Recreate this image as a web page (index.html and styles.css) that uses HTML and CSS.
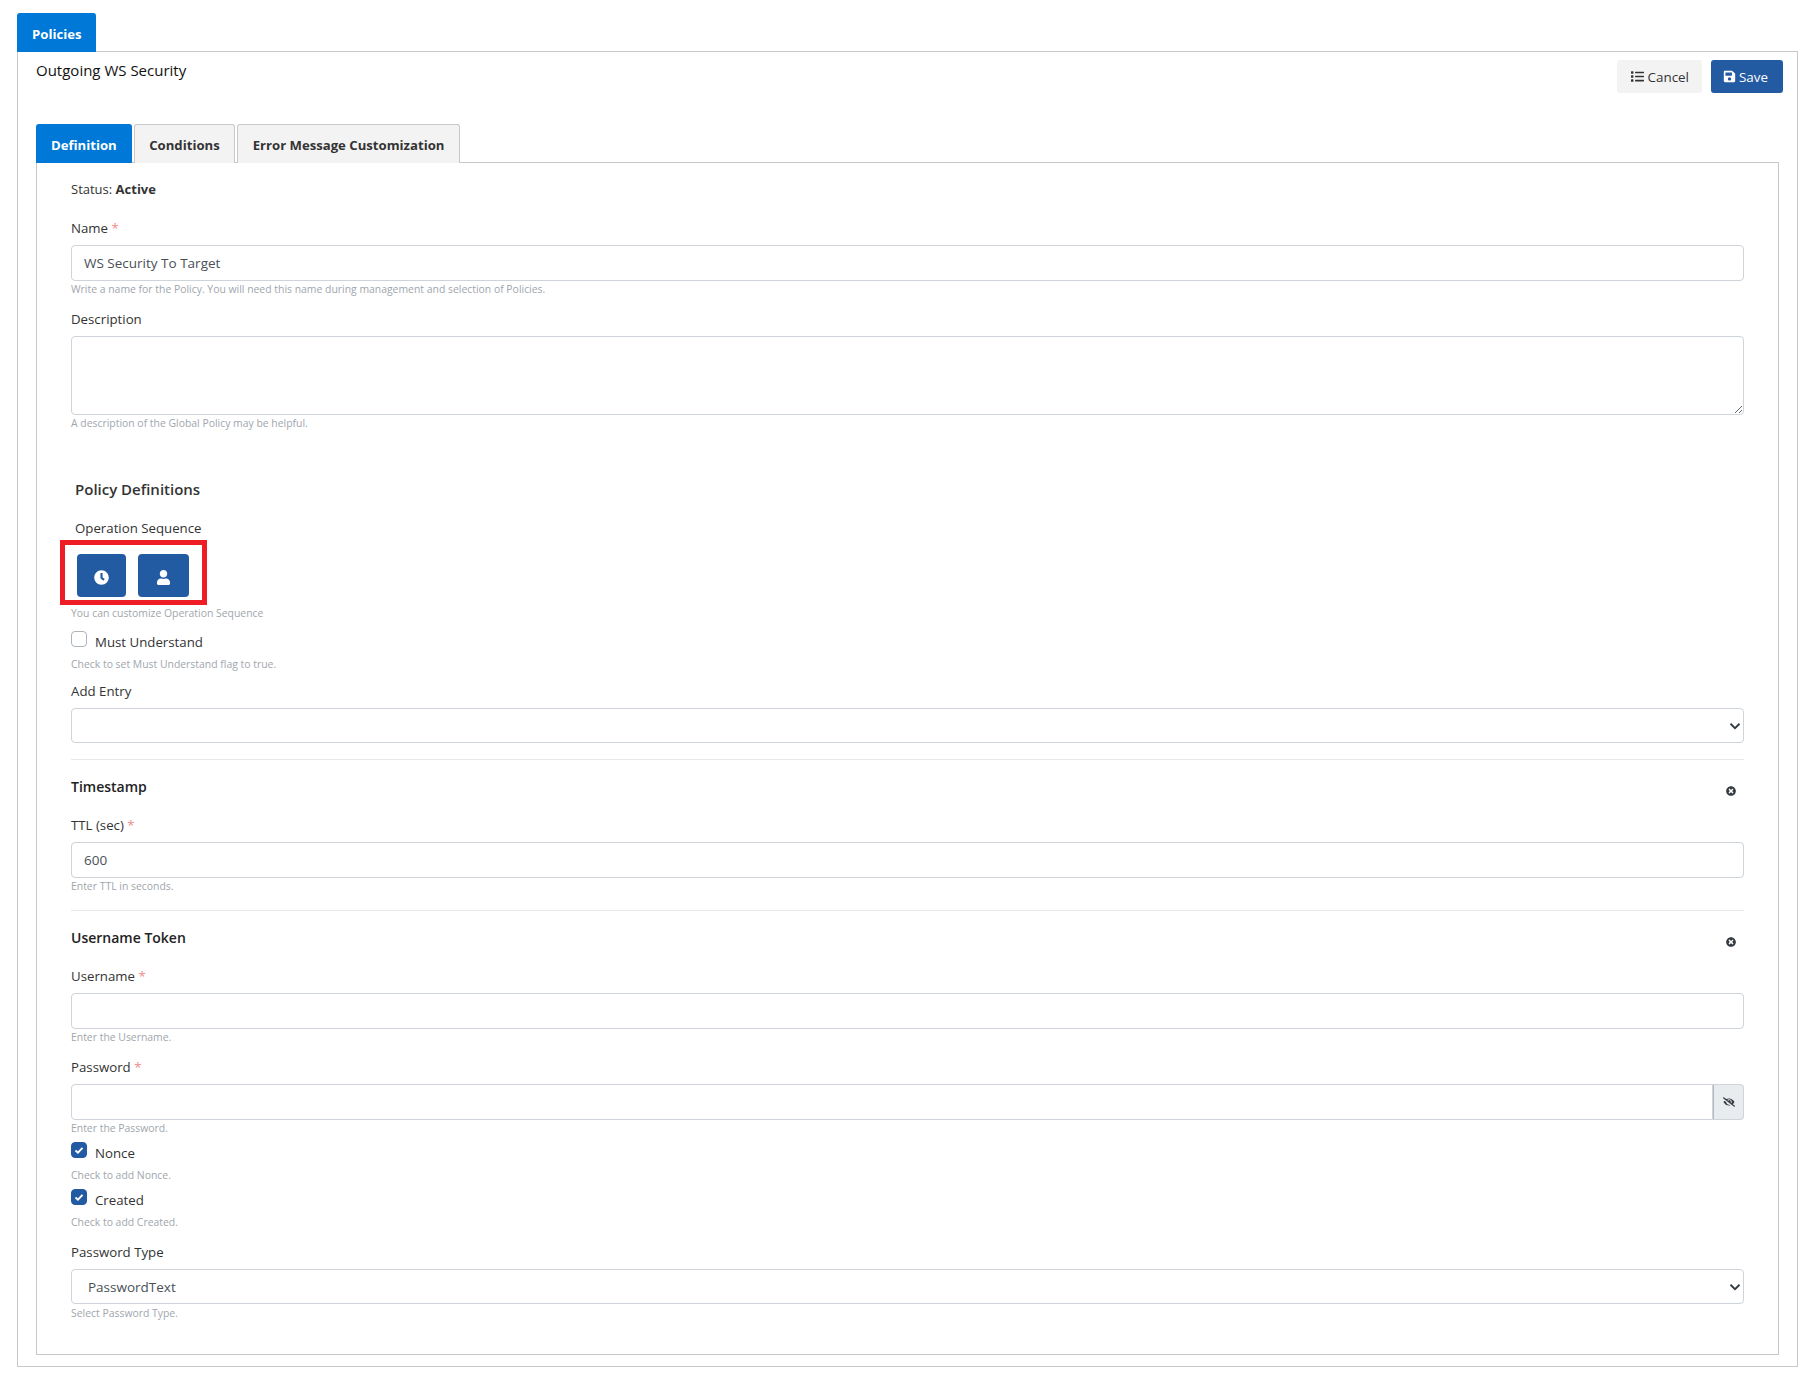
FILE: index.html
```html
<!DOCTYPE html>
<html>
<head>
    <meta charset="utf-8">
    <title>Outgoing WS Security</title>
    <link rel="stylesheet" href="styles.css">
</head>
<body>

<div class="top-tabs">
    <a class="tab tab-active">Policies</a>
</div>

<div class="panel">
    <div class="panel-head">
        <h1 class="page-title">Outgoing WS Security</h1>
        <div class="head-buttons">
            <button class="btn btn-light">
                <svg class="btn-icon" viewBox="0 0 512 512"><path d="M80 368H16a16 16 0 0 0-16 16v64a16 16 0 0 0 16 16h64a16 16 0 0 0 16-16v-64a16 16 0 0 0-16-16zm0-320H16A16 16 0 0 0 0 64v64a16 16 0 0 0 16 16h64a16 16 0 0 0 16-16V64a16 16 0 0 0-16-16zm0 160H16a16 16 0 0 0-16 16v64a16 16 0 0 0 16 16h64a16 16 0 0 0 16-16v-64a16 16 0 0 0-16-16zm416 176H176a16 16 0 0 0-16 16v32a16 16 0 0 0 16 16h320a16 16 0 0 0 16-16v-32a16 16 0 0 0-16-16zm0-320H176a16 16 0 0 0-16 16v32a16 16 0 0 0 16 16h320a16 16 0 0 0 16-16V80a16 16 0 0 0-16-16zm0 160H176a16 16 0 0 0-16 16v32a16 16 0 0 0 16 16h320a16 16 0 0 0 16-16v-32a16 16 0 0 0-16-16z"/></svg>
                Cancel
            </button>
            <button class="btn btn-blue">
                <svg class="btn-icon" viewBox="0 0 448 512"><path d="M433.900 129.900l-83.900-83.900A48 48 0 0 0 316.100 32H48C21.500 32 0 53.500 0 80v352c0 26.500 21.500 48 48 48h352c26.500 0 48-21.500 48-48V163.900a48 48 0 0 0-14.100-34zM224 416c-35.300 0-64-28.700-64-64 0-35.300 28.700-64 64-64s64 28.700 64 64c0 35.300-28.700 64-64 64zm96-304.500V212c0 6.600-5.400 12-12 12H76c-6.600 0-12-5.400-12-12V108c0-6.600 5.400-12 12-12h228.500c3.200 0 6.200 1.300 8.500 3.500l3.500 3.500c2.300 2.300 3.500 5.300 3.500 8.500z"/></svg>
                Save
            </button>
        </div>
    </div>

    <div class="inner-tabs">
        <a class="tab tab-active">Definition</a>
        <a class="tab">Conditions</a>
        <a class="tab">Error Message Customization</a>
    </div>

    <div class="tab-body">
        <p class="status">Status: <b>Active</b></p>

        <div class="field">
            <label>Name <span class="req">*</span></label>
            <input class="control" type="text" value="WS Security To Target">
            <small>Write a name for the Policy. You will need this name during management and selection of Policies.</small>
        </div>

        <div class="field">
            <label>Description</label>
            <textarea class="control control-area"></textarea>
            <small>A description of the Global Policy may be helpful.</small>
        </div>

        <div class="definitions">
            <h2 class="definitions-title">Policy Definitions</h2>
            <label>Operation Sequence</label>
        </div>

        <div class="sequence">
            <button class="seq-btn seq-first">
                <svg class="seq-icon" viewBox="0 0 512 512"><path d="M256 8C119 8 8 119 8 256s111 248 248 248 248-111 248-248S393 8 256 8zm57.100 350.100L224.900 294c-3.100-2.300-4.900-5.900-4.900-9.700V116c0-6.600 5.400-12 12-12h48c6.600 0 12 5.400 12 12v137.700l63.500 46.200c5.400 3.900 6.500 11.400 2.600 16.800l-28.200 38.800c-3.900 5.300-11.400 6.500-16.800 2.600z"/></svg>
            </button>
            <button class="seq-btn seq-second">
                <svg class="seq-icon" viewBox="0 0 448 512"><path d="M224 256c70.700 0 128-57.300 128-128S294.700 0 224 0 96 57.300 96 128s57.300 128 128 128zm89.600 32h-16.700c-22.200 10.200-46.900 16-72.900 16s-50.600-5.800-72.900-16h-16.700C60.200 288 0 348.200 0 422.400V464c0 26.500 21.500 48 48 48h352c26.500 0 48-21.500 48-48v-41.600c0-74.200-60.200-134.400-134.400-134.400z"/></svg>
            </button>
        </div>
        <small class="seq-help">You can customize Operation Sequence</small>

        <div class="check-row check-row-first">
            <span class="check"></span>
            <span>Must Understand</span>
        </div>
        <small>Check to set Must Understand flag to true.</small>

        <div class="field field-add">
            <label>Add Entry</label>
            <div class="select">
                <span></span>
                <svg class="chevron" viewBox="0 0 16 16"><path d="M2 5l6 6 6-6" fill="none" stroke="#343a40" stroke-width="2.400"/></svg>
            </div>
        </div>

        <hr>

        <div class="entry-head">
            <h3>Timestamp</h3>
            <svg class="remove" viewBox="0 0 512 512"><path d="M256 8C119 8 8 119 8 256s111 248 248 248 248-111 248-248S393 8 256 8zm121.600 313.100c4.700 4.700 4.700 12.300 0 17L338 377.600c-4.700 4.700-12.300 4.700-17 0L256 312l-65.100 65.600c-4.700 4.700-12.300 4.700-17 0L134.400 338c-4.700-4.700-4.700-12.300 0-17l65.600-65-65.600-65.100c-4.700-4.700-4.700-12.300 0-17l39.600-39.600c4.700-4.700 12.300-4.700 17 0l65 65.700 65.100-65.600c4.700-4.700 12.300-4.700 17 0l39.600 39.600c4.700 4.700 4.700 12.300 0 17L312 256l65.600 65.100z"/></svg>
        </div>

        <div class="field field-tight">
            <label>TTL (sec) <span class="req">*</span></label>
            <input class="control" type="text" value="600">
            <small>Enter TTL in seconds.</small>
        </div>

        <hr>

        <div class="entry-head">
            <h3>Username Token</h3>
            <svg class="remove" viewBox="0 0 512 512"><path d="M256 8C119 8 8 119 8 256s111 248 248 248 248-111 248-248S393 8 256 8zm121.600 313.100c4.700 4.700 4.700 12.300 0 17L338 377.600c-4.700 4.700-12.300 4.700-17 0L256 312l-65.100 65.600c-4.700 4.700-12.300 4.700-17 0L134.400 338c-4.700-4.700-4.700-12.300 0-17l65.600-65-65.600-65.100c-4.700-4.700-4.700-12.300 0-17l39.600-39.600c4.700-4.700 12.300-4.700 17 0l65 65.700 65.100-65.600c4.700-4.700 12.300-4.700 17 0l39.600 39.600c4.700 4.700 4.700 12.300 0 17L312 256l65.600 65.100z"/></svg>
        </div>

        <div class="field">
            <label>Username <span class="req">*</span></label>
            <input class="control" type="text">
            <small>Enter the Username.</small>
        </div>

        <div class="field field-password">
            <label>Password <span class="req">*</span></label>
            <div class="input-group">
                <input class="control control-left" type="text">
                <span class="addon">
                    <svg class="eye" viewBox="0 0 640 512"><path d="M320 400c-75.900 0-137.300-58.700-142.900-133.100L72.200 185.800c-13.800 17.300-26.500 35.600-36.700 55.600a32.400 32.400 0 0 0 0 29.200C89.700 376.400 197.100 448 320 448c26.900 0 52.900-4 77.900-10.500L346 397.400a144.100 144.100 0 0 1-26 2.600zm313.800 58.100l-110.600-85.400a331.300 331.300 0 0 0 81.300-102.100 32.400 32.400 0 0 0 0-29.200C550.300 135.600 442.900 64 320 64a308.200 308.200 0 0 0-147.300 37.700L45.500 3.400A16 16 0 0 0 23 6.200L3.400 31.500A16 16 0 0 0 6.200 54l588.300 454.700a16 16 0 0 0 22.500-2.800l19.600-25.300a16 16 0 0 0-2.800-22.500zm-183.700-142l-39.300-30.400A94.800 94.800 0 0 0 416 256a94.800 94.800 0 0 0-121.300-92.200A47.700 47.700 0 0 1 304 192a46.600 46.600 0 0 1-1.500 10l-73.600-56.900A142.300 142.300 0 0 1 320 112a143.900 143.900 0 0 1 144 144c0 21.600-5.300 41.800-13.900 60.100z"/></svg>
                </span>
            </div>
            <small>Enter the Password.</small>
        </div>

        <div class="check-row">
            <span class="check check-on">
                <svg viewBox="0 0 16 16"><path d="M4 8.500l2.800 2.500L12 5.500" fill="none" stroke="#fff" stroke-width="2.200"/></svg>
            </span>
            <span>Nonce</span>
        </div>
        <small>Check to add Nonce.</small>

        <div class="check-row">
            <span class="check check-on">
                <svg viewBox="0 0 16 16"><path d="M4 8.500l2.800 2.500L12 5.500" fill="none" stroke="#fff" stroke-width="2.200"/></svg>
            </span>
            <span>Created</span>
        </div>
        <small>Check to add Created.</small>

        <div class="field field-type">
            <label>Password Type</label>
            <div class="select">
                <span class="select-value">PasswordText</span>
                <svg class="chevron" viewBox="0 0 16 16"><path d="M2 5l6 6 6-6" fill="none" stroke="#343a40" stroke-width="2.400"/></svg>
            </div>
            <small>Select Password Type.</small>
        </div>
    </div>
</div>

</body>
</html>
```

FILE: styles.css
```css
* {
    box-sizing: border-box;
}

body {
    margin: 0;
    padding: 13px 14px 9px 17px;
    font-family: "Open Sans", sans-serif;
    font-size: 13.5px;
    color: #333;
    background: #fff;
}

.top-tabs, .inner-tabs {
    display: flex;
    gap: 2px;
}

.top-tabs {
    height: 39px;
}

.tab {
    display: flex;
    align-items: center;
    padding: 1px 14.5px 0;
    height: 39px;
    font-size: 13.15px;
    font-weight: 700;
    color: #333;
    background: #f3f3f3;
    border: 1px solid #c8c8c8;
    border-bottom: none;
    border-radius: 3px 3px 0 0;
}

.tab-active {
    padding: 1px 14px 0;
    color: #fff;
    background: #0078d7;
    border-color: #0078d7;
}

.panel {
    height: 1316px;
    margin-top: -1px;
    padding: 8px 18px 12px 18px;
    border: 1px solid #c8c8c8;
}

.panel-head {
    display: flex;
    justify-content: space-between;
    align-items: flex-start;
    height: 64px;
}

.page-title {
    margin: 0;
    font-size: 15px;
    font-weight: 400;
    color: #111;
    line-height: 20px;
}

.head-buttons {
    display: flex;
    gap: 9px;
    margin-right: -4px;
}

.btn {
    display: flex;
    align-items: center;
    gap: 3px;
    height: 33px;
    font-family: inherit;
    font-size: 13.4px;
    border: none;
    border-radius: 3px;
}

.btn-light {
    gap: 4px;
    color: #333;
    background: #f3f3f3;
    padding: 0 13px 0 14px;
}

.btn-blue {
    color: #fff;
    background: #235ba3;
    padding: 0 15px 0 12px;
}

.btn-icon {
    width: 13px;
    height: 13px;
    fill: currentColor;
}

.tab-body {
    height: 1193px;
    margin-top: -1px;
    padding: 17px 34px 0 34px;
    border: 1px solid #c8c8c8;
}

.status {
    margin: 0 0 21px;
    line-height: 18px;
    font-size: 13px;
}

.field {
    margin-bottom: 13px;
}

label {
    display: block;
    line-height: 18px;
    margin-bottom: 8px;
    font-size: 13.25px;
}

.req {
    color: #f28b8b;
}

.control {
    display: block;
    width: 100%;
    height: 36px;
    padding: 0 12px;
    font-family: inherit;
    font-size: 13.5px;
    color: #495057;
    background: #fff;
    border: 1px solid #ced4da;
    border-radius: 4px;
    outline: none;
}

.control-area {
    height: 79px;
    resize: vertical;
}

small {
    display: block;
    margin-top: 1px;
    line-height: 15px;
    font-size: 10.42px;
    color: #a0a6ac;
}

.definitions {
    margin-top: 48px;
    padding-left: 4px;
}

.definitions-title {
    margin: 0 0 20px;
    font-size: 15px;
    font-weight: 600;
    line-height: 20px;
}

.definitions label {
    margin-bottom: 3px;
}

.sequence {
    display: flex;
    gap: 12px;
    width: fit-content;
    margin-left: -11px;
    padding: 9px 13px 3px 12px;
    border: 5px solid #ee1c25;
}

.seq-btn {
    display: flex;
    align-items: center;
    justify-content: center;
    height: 43px;
    padding: 3px 0 0;
    color: #fff;
    background: #235ba3;
    border: none;
    border-radius: 4px;
}

.seq-first {
    width: 49px;
}

.seq-second {
    width: 51px;
}

.seq-icon {
    width: 15px;
    height: 15px;
    fill: #fff;
}

.check-row {
    display: flex;
    align-items: flex-start;
    gap: 8px;
    height: 25px;
    margin-top: 6px;
    font-size: 13.25px;
}

.check-row-first {
    margin-top: 10px;
}

.check-row span:last-child {
    margin-top: 2px;
    line-height: 18px;
}

.check {
    display: block;
    width: 16px;
    height: 16px;
    background: #fff;
    border: 1px solid #adb5bd;
    border-radius: 4px;
}

.check-on {
    background: #235ba3;
    border-color: #235ba3;
}

.check svg {
    display: block;
    width: 14px;
    height: 14px;
}

.field-add {
    margin: 10px 0 16px;
}

.field-password {
    margin-bottom: 0;
}

.field-type {
    margin-top: 13px;
}

.field-type small {
    margin-top: 2px;
}

.select {
    display: flex;
    align-items: center;
    justify-content: space-between;
    height: 35px;
    padding: 0 2px 0 16px;
    font-size: 13.5px;
    color: #495057;
    border: 1px solid #ced4da;
    border-radius: 4px;
}

.chevron {
    width: 12px;
    height: 12px;
}

hr {
    margin: 0;
    border: none;
    border-top: 1px solid #e7e8ea;
}

.entry-head {
    display: flex;
    justify-content: space-between;
    align-items: flex-start;
    height: 56px;
    padding: 17px 8px 0 0;
}

.entry-head h3 {
    margin: 0;
    font-size: 14px;
    font-weight: 600;
    line-height: 20px;
    color: #222;
}

.remove {
    width: 10px;
    height: 10px;
    margin-top: 9px;
    fill: #343a40;
}

.field-tight {
    margin-bottom: 16px;
}

.input-group {
    display: flex;
}

.control-left {
    flex: 1;
    border-radius: 4px 0 0 4px;
}

.addon {
    display: flex;
    align-items: center;
    justify-content: center;
    width: 31px;
    background: #e9ecef;
    border: 1px solid #ced4da;
    border-left-color: #b0b8c4;
    border-radius: 0 4px 4px 0;
}

.eye {
    width: 12px;
    height: 12px;
    fill: #343a40;
}
```
